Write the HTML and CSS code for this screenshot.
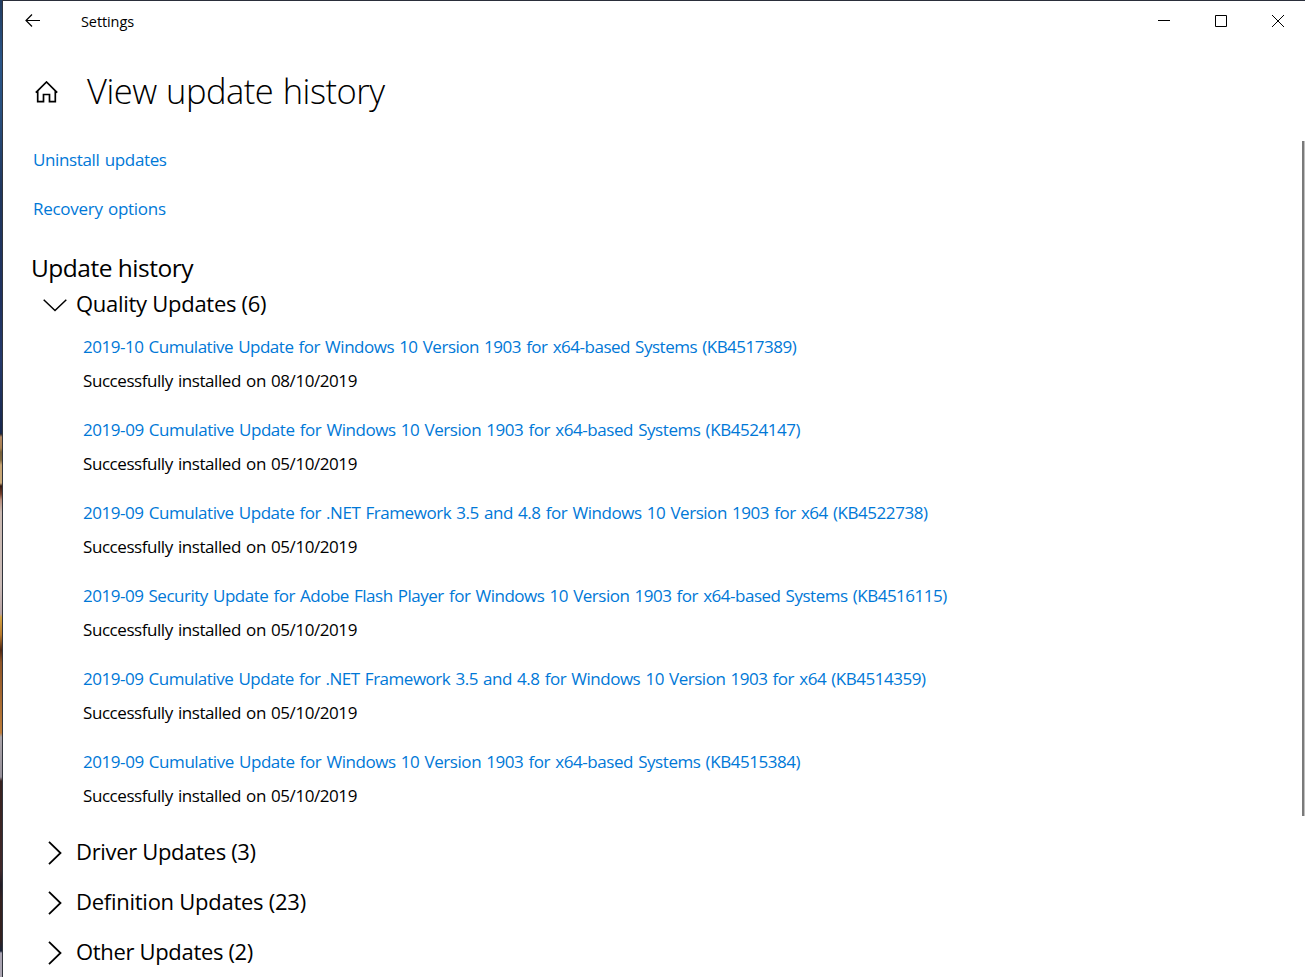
FILE: index.html
```html
<!DOCTYPE html>
<html lang="en">
<head>
<meta charset="utf-8">
<title>Settings</title>
<link rel="stylesheet" href="styles.css">
</head>
<body>
<div class="desktop"></div>
<main class="window">
  <header class="titlebar">
    <svg class="back" width="16" height="14" viewBox="0 0 16 14"><path d="M7 .5 1 6.500l6 6M1 6.500h14"/></svg>
    <span class="app-name">Settings</span>
    <div class="controls">
      <svg width="12" height="12" viewBox="0 0 12 12"><path d="M0 5.500h12"/></svg>
      <svg width="12" height="12" viewBox="0 0 12 12"><path d="M.5 .5h11v11H.5z"/></svg>
      <svg width="12" height="12" viewBox="0 0 12 12"><path d="M0 0l12 12M12 0 0 12"/></svg>
    </div>
  </header>
  <div class="page-head">
    <svg class="home" width="24" height="22" viewBox="0 0 24 22"><path d="M.8 11.700 11.500 1l10.700 10.700M2.700 10v10.700h5.800v-7.200h6v7.200h5.800V10"/></svg>
    <h1>View update history</h1>
  </div>
  <nav class="links">
    <a class="uninstall">Uninstall updates</a>
    <a class="recovery">Recovery options</a>
  </nav>
  <h2>Update history</h2>
  <section class="group open">
    <h3><svg width="24" height="13" viewBox="0 0 24 13"><path d="M.7 .8 12 11.500 23.300 .8"/></svg><span class="quality">Quality Updates (6)</span></h3>
    <ul>
      <li><a class="u1">2019-10 Cumulative Update for Windows 10 Version 1903 for x64-based Systems (KB4517389)</a><p>Successfully installed on 08/10/2019</p></li>
      <li><a class="u2">2019-09 Cumulative Update for Windows 10 Version 1903 for x64-based Systems (KB4524147)</a><p>Successfully installed on 05/10/2019</p></li>
      <li><a class="u3">2019-09 Cumulative Update for .NET Framework 3.5 and 4.8 for Windows 10 Version 1903 for x64 (KB4522738)</a><p>Successfully installed on 05/10/2019</p></li>
      <li><a class="u4">2019-09 Security Update for Adobe Flash Player for Windows 10 Version 1903 for x64-based Systems (KB4516115)</a><p>Successfully installed on 05/10/2019</p></li>
      <li><a class="u5">2019-09 Cumulative Update for .NET Framework 3.5 and 4.8 for Windows 10 Version 1903 for x64 (KB4514359)</a><p>Successfully installed on 05/10/2019</p></li>
      <li><a class="u2">2019-09 Cumulative Update for Windows 10 Version 1903 for x64-based Systems (KB4515384)</a><p>Successfully installed on 05/10/2019</p></li>
    </ul>
  </section>
  <section class="group"><h3><svg width="14" height="24" viewBox="0 0 14 24"><path d="M1 .8 12.500 12 1 23.200"/></svg><span class="driver">Driver Updates (3)</span></h3></section>
  <section class="group"><h3><svg width="14" height="24" viewBox="0 0 14 24"><path d="M1 .8 12.500 12 1 23.200"/></svg><span class="definition">Definition Updates (23)</span></h3></section>
  <section class="group"><h3><svg width="14" height="24" viewBox="0 0 14 24"><path d="M1 .8 12.500 12 1 23.200"/></svg><span class="other">Other Updates (2)</span></h3></section>
  <div class="scrollbar"></div>
</main>
</body>
</html>
```

FILE: styles.css
```css
* { box-sizing: border-box; }
body { margin: 0; height: 977px; display: flex; overflow: hidden; background: #fff; color: #000; font-family: "Open Sans", "Noto Sans", sans-serif; }
h1, h2, h3, p, ul { margin: 0; padding: 0; font-weight: 400; }
ul { list-style: none; }
svg { fill: none; stroke: #000; flex: none; }
.desktop { width: 3px; flex: none; border-right: 1px solid #30343c; background: linear-gradient(#213c61 0, #2a5588 60px, #29507f 110px, #20375f 190px, #1f3260 300px, #24396b 360px, #17274d 433px, #272630 434px, #b18763 437px, #a9804f 448px, #756039 452px, #80683f 460px, #c8a574 465px, #c8a877 483px, #33180f 486px, #743d2a 494px, #b98f7d 500px, #cbbab2 512px, #cbbcb8 585px, #b9a4a4 614px, #d4a242 617px, #b8792c 635px, #4f2712 650px, #8f5527 662px, #bd7c39 733px, #aaa4a9 737px, #96909a 777px, #38221f 781px, #40282a 870px, #211c25 885px, #35211f 900px, #32201f 940px, #192339 951px, #a9a3b2 953px, #aaa5b1 977px); }
.window { position: relative; flex: 1; border-top: 1px solid #2a2e3a; }
.titlebar { height: 40px; display: flex; align-items: center; padding: 0 21px 0 22px; }
.back { stroke-width: 1.200; }
.app-name { margin-left: 40px; padding-top: 2px; font-size: 14.500px; letter-spacing: -.1px; line-height: 38px; }
.controls { display: flex; gap: 45px; margin-left: auto; }
.page-head { height: 99px; display: flex; align-items: center; padding-left: 32px; }
.home { stroke-width: 1.700; margin-top: 2px; }
h1 { margin-left: 28px; font-size: 34.500px; font-weight: 300; line-height: 60px; letter-spacing: -.5px; word-spacing: 1px; }
a { color: #0078d7; }
.links { padding-left: 30px; font-size: 17px; word-spacing: 1.200px; }
.links a { display: block; height: 49px; line-height: 39px; }
.uninstall { letter-spacing: -.36px; }
.recovery { letter-spacing: -.28px; }
h2 { padding-left: 28px; padding-top: 1px; margin-top: 11px; font-size: 24.500px; line-height: 36px; height: 36px; letter-spacing: -.5px; }
h3 { display: grid; grid-template-columns: 42px auto; justify-content: start; align-items: center; padding-left: 31px; height: 50px; font-size: 22px; line-height: 36px; letter-spacing: -.33px; }
h3 svg { justify-self: center; stroke-width: 1.800; margin-top: 3px; }
.quality { letter-spacing: -.28px; }
.definition { letter-spacing: -.26px; }
.open h3 { height: 36px; }
.open svg { margin-top: 5px; stroke-width: 1.500; }
ul { height: 507px; padding: 9px 0 0 80px; }
.open { height: 541px; }
li { height: 83px; font-size: 17px; word-spacing: 1.200px; }
li a, li p { display: block; height: 34px; line-height: 34px; }
li p { letter-spacing: -.436px; }
.u1 { letter-spacing: -.49px; }
.u2 { letter-spacing: -.445px; }
.u3 { letter-spacing: -.457px; }
.u4 { letter-spacing: -.487px; }
.u5 { letter-spacing: -.476px; }
.scrollbar { position: absolute; right: 0; top: 140px; width: 3px; height: 675px; background: #7a7a7a; border-right: 1px solid #c0c0c0; }
```
